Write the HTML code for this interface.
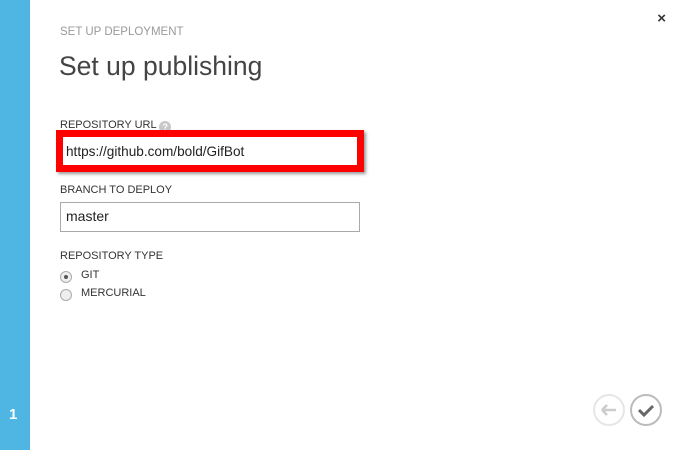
<!DOCTYPE html>
<html><head><style>
body{margin:0;width:680px;height:450px;background:#fff;font-family:"Segoe UI","Liberation Sans",sans-serif;position:relative;overflow:hidden;color:#333}
.side{position:absolute;left:0;top:0;width:30px;height:450px;background:#4fb5e2}
.num{position:absolute;left:9px;top:406px;color:#fff;font-size:15px;font-weight:bold}
.a{position:absolute}
.lbl{font-size:11px;color:#333}
</style></head><body>
<div class="side"></div><div class="num">1</div>
<div class="a" style="right:14px;top:10px;font-size:15px;font-weight:bold;color:#333">×</div>
<div class="a" style="left:60px;top:26px;font-size:11.5px;color:#9a9a9a">SET UP DEPLOYMENT</div>
<div class="a" style="left:59px;top:51px;font-size:26.5px;font-weight:300;color:#444">Set up publishing</div>
<div class="a lbl" style="left:60px;top:119px">REPOSITORY URL <span style="display:inline-block;width:12px;height:12px;border-radius:50%;background:#c8c8c8;color:#fff;font-size:9px;text-align:center;line-height:12px;font-weight:bold;vertical-align:-2px">?</span></div>
<div class="a" style="left:56px;top:130px;width:294px;height:28px;border:7px solid #f00;box-shadow:2px 2px 3px #999"></div>
<div class="a" style="left:66px;top:144px;font-size:13.6px;color:#222">https://github.com/bold/GifBot</div>
<div class="a lbl" style="left:60px;top:184px">BRANCH TO DEPLOY</div>
<div class="a" style="left:60px;top:202px;width:298px;height:28px;border:1px solid #aaa"></div>
<div class="a" style="left:66px;top:208px;font-size:14px;color:#222">master</div>
<div class="a lbl" style="left:60px;top:250px">REPOSITORY TYPE</div>
<div class="a" style="left:60px;top:271px;width:10px;height:10px;border:1px solid #aaa;border-radius:50%;background:#eee"><div style="margin:3px;width:4px;height:4px;border-radius:50%;background:#555"></div></div>
<div class="a lbl" style="left:81px;top:269px">GIT</div>
<div class="a" style="left:60px;top:289px;width:10px;height:10px;border:1px solid #aaa;border-radius:50%;background:#eee"></div>
<div class="a lbl" style="left:81px;top:287px">MERCURIAL</div>
<svg class="a" style="left:590px;top:392px" width="80" height="38">
<circle cx="19" cy="18" r="15" fill="none" stroke="#e6e6e6" stroke-width="2"/>
<path d="M12 18h14M12 18l5-5M12 18l5 5" stroke="#ccc" stroke-width="2.5" fill="none"/>
<circle cx="56" cy="18" r="15" fill="none" stroke="#bbb" stroke-width="2"/>
<path d="M49 18l5 5 9-9" stroke="#666" stroke-width="3" fill="none"/>
</svg>
</body></html>
